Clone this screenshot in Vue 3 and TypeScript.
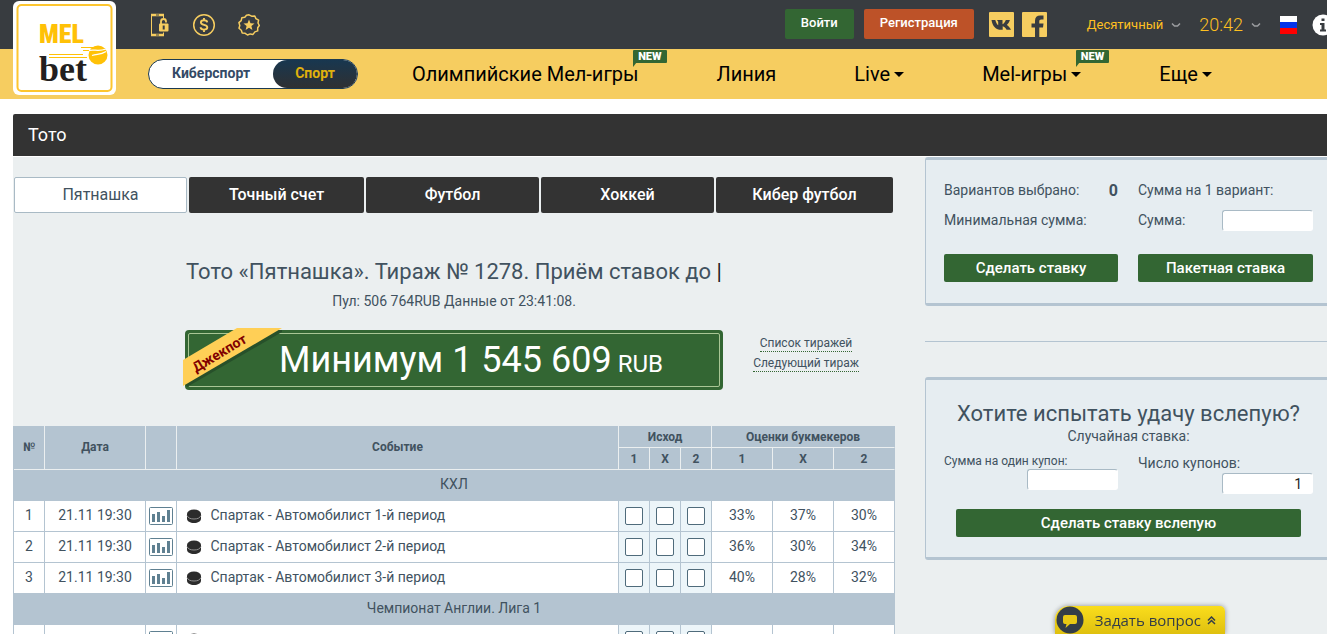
<script setup lang="ts">
import { ref } from 'vue'

interface Match {
  id: number
  date: string
  name: string
  odds: string[]
}
interface Group {
  title: string
  matches: Match[]
}

const tabs = ['Пятнашка', 'Точный счет', 'Футбол', 'Хоккей', 'Кибер футбол']
const activeTab = ref(0)

const groups: Group[] = [
  {
    title: 'КХЛ',
    matches: [
      { id: 1, date: '21.11 19:30', name: 'Спартак - Автомобилист 1-й период', odds: ['33%', '37%', '30%'] },
      { id: 2, date: '21.11 19:30', name: 'Спартак - Автомобилист 2-й период', odds: ['36%', '30%', '34%'] },
      { id: 3, date: '21.11 19:30', name: 'Спартак - Автомобилист 3-й период', odds: ['40%', '28%', '32%'] },
    ],
  },
  {
    title: 'Чемпионат Англии. Лига 1',
    matches: [{ id: 4, date: '', name: '', odds: ['', '', ''] }],
  },
]
const outcomes = ['1', 'X', '2']
const coupons = ref('1')
</script>

<template>
  <div class="page">
    <header class="header">
      <a class="logo" href="#" aria-label="MELbet">
        <svg width="103" height="95" viewBox="0 0 103 95">
          <rect x="0" y="1" width="103" height="94" rx="6" fill="#fff" />
          <rect x="4.5" y="5" width="94" height="86" rx="4" fill="none" stroke="#fdc62f" stroke-width="2" />
          <text x="26" y="43" class="logo-mel">MEL</text>
          <path d="M36 54.500H70M36 57.500H74M68 47.500H80M70 50.500H78" stroke="#ffc107" stroke-width="1" />
          <text x="26" y="81" class="logo-bet">bet</text>
          <circle cx="85" cy="55" r="9.500" fill="#ffc107" />
          <path d="M76 50.500c5-1.500 9 1.500 17-1.500M79 55.500c5-2 8 0 14-4" stroke="#fff" stroke-width="1.300" fill="none" />
        </svg>
      </a>
      <div class="topbar">
        <nav class="quick" aria-label="Быстрые ссылки">
          <a href="#" aria-label="Мобильная версия">
            <svg width="24" height="24" viewBox="0 0 24 24" fill="none" stroke="#f6cd60">
              <path d="M4.500 3V21" />
              <path d="M4 2H17M4 22H17" stroke-width="2.500" />
              <path d="M16.500 3V5M16.500 19.500V21" />
              <path d="M9 2H12M9 22H12" stroke="#383c40" />
              <path d="M14 11V8.500a2.500 2.500 0 0 1 5 0V9.500" stroke-width="1.800" />
              <rect x="12" y="10.500" width="9.500" height="8" rx="1" fill="#f6cd60" stroke="none" />
              <path d="M16.700 12.500V16.500" stroke="#383c40" stroke-width="2" />
            </svg>
          </a>
          <a href="#" aria-label="Платежи">
            <svg width="24" height="24" viewBox="0 0 24 24" fill="none" stroke="#f6cd60">
              <circle cx="12" cy="12" r="10.300" stroke-width="1.500" />
              <path d="M15.200 9.300C15 7.800 13.800 7.300 12 7.300S8.900 8.100 8.900 9.600C8.900 12.700 15.300 11.100 15.300 14.300C15.300 15.900 13.900 16.600 12 16.600S8.700 15.900 8.600 14.300M12 5V7.500M12 16.500V19" stroke-width="1.900" />
            </svg>
          </a>
          <a href="#" aria-label="Бонусы">
            <svg width="24" height="24" viewBox="0 0 24 24" fill="none" stroke="#f6cd60">
              <path d="M12 1.800L14.600 3.200L17.800 3L18.900 5.600L21.600 7.200L21 10L22.300 12.500L20.700 14.800L20.700 17.900L17.900 18.900L16 21.400L13.200 20.900L10.500 22L8.200 20.300L5.200 20L4.300 17.200L2 15.200L2.800 12.500L1.900 9.600L4.200 7.600L4.800 4.800L7.800 4.300L9.500 2.200Z" stroke-width="1.500" stroke-linejoin="round" />
              <path d="M12 6.500L13.500 10.200L17.500 10.500L14.400 13L15.400 16.900L12 14.800L8.600 16.900L9.600 13L6.500 10.500L10.500 10.200Z" fill="#f6cd60" stroke="none" />
            </svg>
          </a>
        </nav>
        <div class="account">
          <button type="button" class="btn-top login">Войти</button>
          <button type="button" class="btn-top register">Регистрация</button>
          <a class="social" href="#" aria-label="ВКонтакте">
            <svg width="25" height="25" viewBox="0 0 25 25">
              <rect width="25" height="25" rx="1" fill="#f6cd60" />
              <path d="M2.500 8H6.300C7 10.600 8 12.600 9.200 13.200V9.800L8 8H13.500V12.300C14.700 11.700 16 10 16.800 8H20.900C20.300 10.200 18.900 12 17.800 12.900C19.400 13.800 20.900 15.400 22 17.800H17.600C16.700 16 15.200 14.600 13.700 14.200V17.800H12.200C7 17.800 3.500 14.500 2.500 8Z" fill="#383c40" />
            </svg>
          </a>
          <a class="social" href="#" aria-label="Facebook">
            <svg width="25" height="25" viewBox="0 0 25 25">
              <rect width="25" height="25" rx="1" fill="#f6cd60" />
              <path d="M13 25V15.500H9.500V11.500H13V8.800C13 5.300 15 3.500 18.200 3.500H21.500V7.500H19.300C17.700 7.500 17.300 8.200 17.300 9.500V11.500H21.500L21 15.500H17.300V25Z" fill="#383c40" />
            </svg>
          </a>
          <button type="button" class="pick odds-format">
            Десятичный
            <svg width="10" height="6" viewBox="0 0 10 6"><path d="M1 1.500L3.500 4H6.500L9 1.500" fill="none" stroke="#9b9da0" stroke-width="1.500" /></svg>
          </button>
          <button type="button" class="pick clock">
            20:42
            <svg width="10" height="6" viewBox="0 0 10 6"><path d="M1 1.500L3.500 4H6.500L9 1.500" fill="none" stroke="#9b9da0" stroke-width="1.500" /></svg>
          </button>
          <button type="button" class="pick flag" aria-label="Русский">
            <svg width="17" height="18" viewBox="0 0 17 18">
              <rect width="17" height="6" fill="#fff" /><rect y="6" width="17" height="6" fill="#0433e8" /><rect y="12" width="17" height="6" fill="#f00" />
            </svg>
          </button>
          <button type="button" class="pick info" aria-label="Информация">
            <svg width="22" height="22" viewBox="0 0 22 22">
              <circle cx="11" cy="11" r="10.500" fill="#fff" />
              <path d="M9.500 4.500H12.500V7H9.500ZM8 9H12.500V15.500H14V17.500H8V15.500H9.500V11H8Z" fill="#383c40" />
            </svg>
          </button>
        </div>
      </div>
      <div class="navbar">
        <div class="switch">
          <a href="#" class="switch-item">Киберспорт</a>
          <a href="#" class="switch-item on">Спорт</a>
        </div>
        <nav class="menu">
          <a href="#">Олимпийские Мел-игры<span class="new">NEW</span></a>
          <a href="#">Линия</a>
          <a href="#">Live<i class="caret"></i></a>
          <a href="#">Mel-игры<i class="caret"></i><span class="new">NEW</span></a>
          <a href="#">Еще<i class="caret"></i></a>
        </nav>
      </div>
    </header>

    <main class="main">
      <h1 class="title">Тото</h1>
      <div class="columns">
        <section class="content">
          <div class="tabs">
            <button
              v-for="(tab, i) in tabs"
              :key="tab"
              type="button"
              class="tab"
              :class="{ active: i === activeTab }"
              @click="activeTab = i"
            >{{ tab }}</button>
          </div>
          <h2 class="draw">Тото «Пятнашка». Тираж № 1278. Приём ставок до <span class="bar">|</span></h2>
          <p class="pool">Пул: 506 764RUB Данные от 23:41:08.</p>
          <div class="jackpot-row">
            <div class="jackpot">
              <div class="jackpot-inner">Минимум 1 545 609<small> RUB</small></div>
              <div class="ribbon">
                <svg width="99" height="62" viewBox="0 0 99 62">
                  <path d="M4 59L99 4V2H90L2 55Z" fill="#27502a" />
                  <path d="M0 32L54 0H99L0 58Z" fill="#ffcf56" />
                </svg>
                <span>Джекпот</span>
              </div>
            </div>
            <div class="links">
              <a href="#">Список тиражей</a>
              <a href="#">Следующий тираж</a>
            </div>
          </div>
          <table class="grid">
            <colgroup>
              <col class="c-num" /><col class="c-date" /><col class="c-stat" /><col />
              <col class="c-pick" /><col class="c-pick" /><col class="c-pick" />
              <col class="c-odd" /><col class="c-odd" /><col class="c-odd" />
            </colgroup>
            <thead>
              <tr>
                <th rowspan="2" class="tall">№</th>
                <th rowspan="2" class="tall">Дата</th>
                <th rowspan="2"></th>
                <th rowspan="2" class="tall">Событие</th>
                <th colspan="3">Исход</th>
                <th colspan="3" class="last">Оценки букмекеров</th>
              </tr>
              <tr>
                <th v-for="o in outcomes" :key="'p' + o">{{ o }}</th>
                <th v-for="o in outcomes" :key="'b' + o" :class="{ last: o === '2' }">{{ o }}</th>
              </tr>
            </thead>
            <tbody v-for="g in groups" :key="g.title">
              <tr class="group"><td colspan="10">{{ g.title }}</td></tr>
              <tr v-for="m in g.matches" :key="m.id">
                <td>{{ m.date ? m.id : '' }}</td>
                <td>{{ m.date }}</td>
                <td class="control">
                  <svg class="stat" width="24" height="18" viewBox="0 0 24 18">
                    <rect x="0.500" y="0.500" width="23" height="17" rx="1" fill="#fff" stroke="#5f8091" />
                    <path d="M3 7H6V15H3ZM8 5H11V15H8ZM13 9H16V15H13ZM18 3H21V15H18Z" fill="#5f8091" />
                  </svg>
                </td>
                <td class="event">
                  <svg class="puck" width="16" height="16" viewBox="0 0 16 16">
                    <path d="M1 6V10.500C1 13.300 4.100 15 8 15S15 13.300 15 10.500V6Z" fill="#2c2c2c" />
                    <ellipse cx="8" cy="5.800" rx="7" ry="4.300" fill="#2c2c2c" />
                    <path d="M1 7.500C2 10 4.500 11 8 11S14 10 15 7.500" fill="none" stroke="#999" stroke-width="0.900" />
                  </svg>
                  {{ m.name }}
                </td>
                <td v-for="o in outcomes" :key="o" class="control pick-cell">
                  <input type="checkbox" :aria-label="m.name + ' ' + o" />
                </td>
                <td v-for="(odd, i) in m.odds" :key="i">{{ odd }}</td>
              </tr>
            </tbody>
          </table>
        </section>

        <aside class="side">
          <section class="panel bet">
            <div class="half">
              <div class="line"><span>Вариантов выбрано:</span><b>0</b></div>
              <div class="line"><span>Минимальная сумма:</span></div>
              <button type="button" class="btn">Сделать ставку</button>
            </div>
            <div class="half">
              <div class="line"><span>Сумма на 1 вариант:</span></div>
              <div class="line"><label for="sum">Сумма:</label><input id="sum" type="text" class="field" /></div>
              <button type="button" class="btn">Пакетная ставка</button>
            </div>
          </section>
          <hr class="rule" />
          <section class="panel lucky">
            <h3>Хотите испытать удачу вслепую?</h3>
            <p>Случайная ставка:</p>
            <div class="coupon">
              <div class="stack">
                <label class="small" for="coupon-sum">Сумма на один купон:</label>
                <input id="coupon-sum" type="text" class="field" />
              </div>
              <div class="stack">
                <label for="coupon-count">Число купонов:</label>
                <input id="coupon-count" v-model="coupons" type="text" class="field" />
              </div>
            </div>
            <button type="button" class="btn wide">Сделать ставку вслепую</button>
          </section>
        </aside>
      </div>
    </main>

    <button type="button" class="chat">
      <svg width="28" height="28" viewBox="0 0 28 28">
        <circle cx="14" cy="14" r="13.500" fill="#343d47" />
        <path d="M9 9H19Q21 9 21 11V16Q21 18 19 18H14L9.500 22L10.500 18H9Q7 18 7 16V11Q7 9 9 9Z" fill="#e9c914" />
      </svg>
      <span>Задать вопрос</span>
      <svg width="9" height="9" viewBox="0 0 9 9"><path d="M1 4.500L4.500 1L8 4.500M1 8L4.500 4.500L8 8" fill="none" stroke="#343d47" stroke-width="1.500" /></svg>
    </button>
  </div>
</template>

<style>
body {
  margin: 0;
  background: #fff;
}
</style>

<style scoped>
.page {
  position: relative;
  height: 100vh;
  overflow: hidden;
  display: flex;
  flex-direction: column;
  font-family: Roboto, "Open Sans", sans-serif;
  font-size: 14px;
  color: #41525f;
}
* {
  box-sizing: border-box;
}
a {
  color: inherit;
  text-decoration: none;
}
button,
input {
  font-family: inherit;
  margin: 0;
}
button {
  border: 0;
  padding: 0;
  cursor: pointer;
}
svg {
  display: block;
}
.header {
  position: relative;
  flex: none;
}
.logo {
  position: absolute;
  left: 13px;
  top: 0;
  z-index: 2;
}
.logo-mel {
  font: 900 26px "Roboto Condensed", Roboto, sans-serif;
  fill: #ffc107;
}
.logo-bet {
  font: bold 36px "Liberation Serif", serif;
  fill: #231f20;
}
.topbar {
  display: flex;
  align-items: center;
  height: 49px;
  padding-left: 147px;
  background: #383c40;
}
.quick {
  display: flex;
  gap: 21px;
}
.account {
  display: flex;
  align-items: center;
  flex: none;
  margin-left: auto;
  margin-right: -7px;
  height: 46px;
}
.btn-top {
  height: 30px;
  padding-bottom: 2px;
  border-radius: 2px;
  color: #fff;
  font-size: 13px;
  font-weight: 500;
}
.account .btn-top {
  align-self: flex-start;
  margin-top: 7px;
}
.login {
  width: 69px;
  margin-right: 10px;
  background: #336633;
}
.register {
  width: 110px;
  margin-right: 15px;
  background: #bd5228;
}
.social {
  margin-right: 8px;
}
.social + .pick {
  margin-left: 32px;
}
.pick {
  display: flex;
  align-items: center;
  background: none;
  color: #ffc020;
}
.odds-format {
  gap: 8px;
  font-size: 13px;
  margin-right: 18px;
}
.clock {
  gap: 8px;
  font-size: 18px;
  font-weight: 300;
  margin-right: 19px;
}
.flag {
  margin-right: 15px;
}
.navbar {
  display: flex;
  align-items: center;
  height: 50px;
  padding-left: 148px;
  background: #f6cd60;
}
.switch {
  display: flex;
  flex: none;
  width: 210px;
  height: 30px;
  border: 1px solid #1c3a50;
  border-radius: 15px;
  background: #fff;
  overflow: hidden;
  font-size: 14px;
  font-weight: 700;
  line-height: 27px;
  text-align: center;
  color: #344a66;
}
.switch-item {
  flex: 1;
}
.switch-item.on {
  flex: none;
  width: 84px;
  border-radius: 15px;
  background: linear-gradient(#183750, #2f3032);
  color: #e0b10c;
}
.menu {
  display: flex;
  flex: 1;
  gap: 78px;
  margin-left: 54px;
  font-size: 20px;
  color: #000;
  white-space: nowrap;
}
.menu a {
  position: relative;
  display: flex;
  align-items: center;
  height: 50px;
}
.caret {
  width: 0;
  margin-left: 4px;
  border: 5px solid transparent;
  border-top-color: #000;
  border-bottom: 0;
}
.new {
  position: absolute;
  right: -28px;
  top: 1px;
  padding: 0 5px;
  border-radius: 1px;
  background: #336633;
  color: #fff;
  font-size: 11px;
  font-weight: 900;
  line-height: 13px;
}
.new::after {
  content: "";
  position: absolute;
  left: 0;
  top: 12px;
  border-top: 5px solid #336633;
  border-right: 4px solid transparent;
}
.main {
  flex: 1;
  min-height: 0;
  display: flex;
  flex-direction: column;
  margin: 15px 0 0 13px;
}
.title {
  flex: none;
  margin: 0;
  padding: 0 15px;
  background: #333;
  color: #fff;
  border-radius: 2px 0 0 0;
  font-size: 18px;
  font-weight: 400;
  line-height: 42px;
}
.columns {
  flex: 1;
  display: grid;
  grid-template-columns: minmax(0, 1fr) 402px;
  column-gap: 30px;
  margin-top: 1px;
  background: #ebeff0;
}
.content {
  padding-top: 20px;
}
.tabs {
  display: grid;
  grid-template-columns: 173fr 175fr 173fr 173fr 177fr;
  gap: 2px;
  padding: 0 2px 0 1px;
}
.tab {
  height: 36px;
  padding-bottom: 2px;
  border-radius: 2px;
  background: #333;
  color: #fff;
  font-size: 16px;
  font-weight: 500;
}
.tab.active {
  border: 1px solid #a9bac5;
  background: #fff;
  color: #41525f;
  font-weight: 400;
}
.draw {
  margin: 45px 0 0;
  text-align: center;
  font-size: 22px;
  font-weight: 400;
  line-height: 28px;
}
.bar {
  color: #222;
}
.pool {
  margin: 5px 0 0;
  text-align: center;
  line-height: 20px;
}
.jackpot-row {
  display: grid;
  grid-template-columns: 1fr 538px 1fr;
  margin-top: 19px;
}
.jackpot {
  position: relative;
  grid-column: 2;
  padding: 3px;
  border-radius: 4px;
  background: #336633;
}
.jackpot-inner {
  border: 1px solid #a9c695;
  border-radius: 2px;
  padding-left: 34px;
  text-align: center;
  font-size: 36px;
  line-height: 52px;
  color: #fff;
}
.jackpot-inner small {
  font-size: 24px;
  line-height: 24px;
}
.ribbon {
  position: absolute;
  left: -2px;
  top: -2px;
}
.ribbon span {
  position: absolute;
  left: 6px;
  top: 16px;
  transform: rotate(-31deg);
  color: #800000;
  font-size: 14px;
  font-weight: 700;
  line-height: 18px;
}
.links {
  display: flex;
  flex-direction: column;
  align-items: center;
  gap: 4px;
  padding: 6px 6px 0 0;
  font-size: 12px;
}
.links a {
  line-height: 15px;
  border-bottom: 1px dotted #336633;
}
.grid {
  width: 100%;
  margin-top: 36px;
  table-layout: fixed;
  border-spacing: 0;
  border-left: 1px solid #b4c4d1;
  text-align: center;
}
.c-num {
  width: 31px;
}
.c-date {
  width: 101px;
}
.c-stat {
  width: 31px;
}
.c-pick {
  width: 31px;
}
.c-odd {
  width: 61px;
}
th {
  height: 22px;
  padding: 0;
  background: #b4c4d1;
  border-right: 1px solid #ebeff0;
  border-bottom: 1px solid #ebeff0;
  font-size: 12px;
  font-weight: 700;
  line-height: 20px;
}
th.tall {
  padding-bottom: 2px;
}
th.last {
  border-right-color: #b4c4d1;
}
td {
  height: 31px;
  padding: 0 0 2px;
  background: #fff;
  border-right: 1px solid #b4c4d1;
  border-bottom: 1px solid #b4c4d1;
  line-height: 20px;
}
.group td {
  background: #b4c4d1;
}
.stat {
  margin: 0 auto;
}
.event {
  padding-left: 9px;
  text-align: left;
}
.puck {
  display: inline-block;
  vertical-align: -4px;
  margin-right: 5px;
}
td.control {
  padding: 0;
}
.pick-cell {
  background: #ecf5f9;
}
.pick-cell input {
  appearance: none;
  display: block;
  width: 18px;
  height: 18px;
  margin: 0 auto;
  border: 1px solid #4f6b7b;
  border-radius: 2px;
  background: #fff;
}
.panel {
  border: solid #b4c4d1;
  border-width: 3px 0 3px 1px;
  border-radius: 3px 0 0 3px;
  background: #e6edf1;
  padding: 0 14px 0 18px;
}
.bet {
  display: grid;
  grid-template-columns: 174fr 175fr;
  column-gap: 20px;
  padding-top: 18px;
  padding-bottom: 21px;
}
.line {
  display: flex;
  align-items: center;
  justify-content: space-between;
  height: 24px;
  margin-bottom: 6px;
}
.line b {
  font-size: 16px;
}
.half .btn {
  margin-top: 16px;
}
.btn {
  width: 100%;
  height: 28px;
  border-radius: 2px;
  background: #336633;
  color: #fff;
  font-size: 15px;
  font-weight: 500;
}
.field {
  width: 91px;
  height: 21px;
  padding: 0 10px;
  border: 1px solid #fff;
  border-top-color: #a9bac5;
  border-left-color: #a9bac5;
  border-radius: 3px;
  background: #fff;
  color: #222;
  font-size: 14px;
  text-align: right;
}
.rule {
  margin: 35px 0;
  border: 0;
  border-top: 1px solid #b4c4d1;
}
.lucky {
  padding-top: 20px;
  padding-bottom: 20px;
}
.lucky h3 {
  margin: 0;
  text-align: center;
  font-size: 22px;
  font-weight: 400;
  line-height: 28px;
}
.lucky p {
  margin: 0;
  text-align: center;
  line-height: 16px;
}
.coupon {
  display: grid;
  grid-template-columns: 174fr 175fr;
  column-gap: 20px;
  margin-top: 9px;
  min-height: 50px;
}
.stack {
  display: flex;
  flex-direction: column;
}
.stack label {
  line-height: 20px;
}
.stack label.small {
  font-size: 12px;
  line-height: 16px;
}
.stack .field {
  align-self: flex-end;
}
.btn.wide {
  display: block;
  width: auto;
  min-width: 345px;
  margin: 6px auto 0;
}
.chat {
  position: fixed;
  right: 102px;
  bottom: 0;
  z-index: 3;
  display: flex;
  align-items: center;
  gap: 6px;
  height: 28px;
  padding: 0 9px 0 1px;
  border-radius: 14px 5px 0 0;
  background: linear-gradient(#fadd1c, #dfc00f);
  box-shadow: 0 0 5px rgba(0, 0, 0, 0.4);
  color: #343d47;
  font-family: "Open Sans", "Noto Sans", sans-serif;
  font-size: 15px;
}
.chat span {
  margin-left: 5px;
}
</style>
